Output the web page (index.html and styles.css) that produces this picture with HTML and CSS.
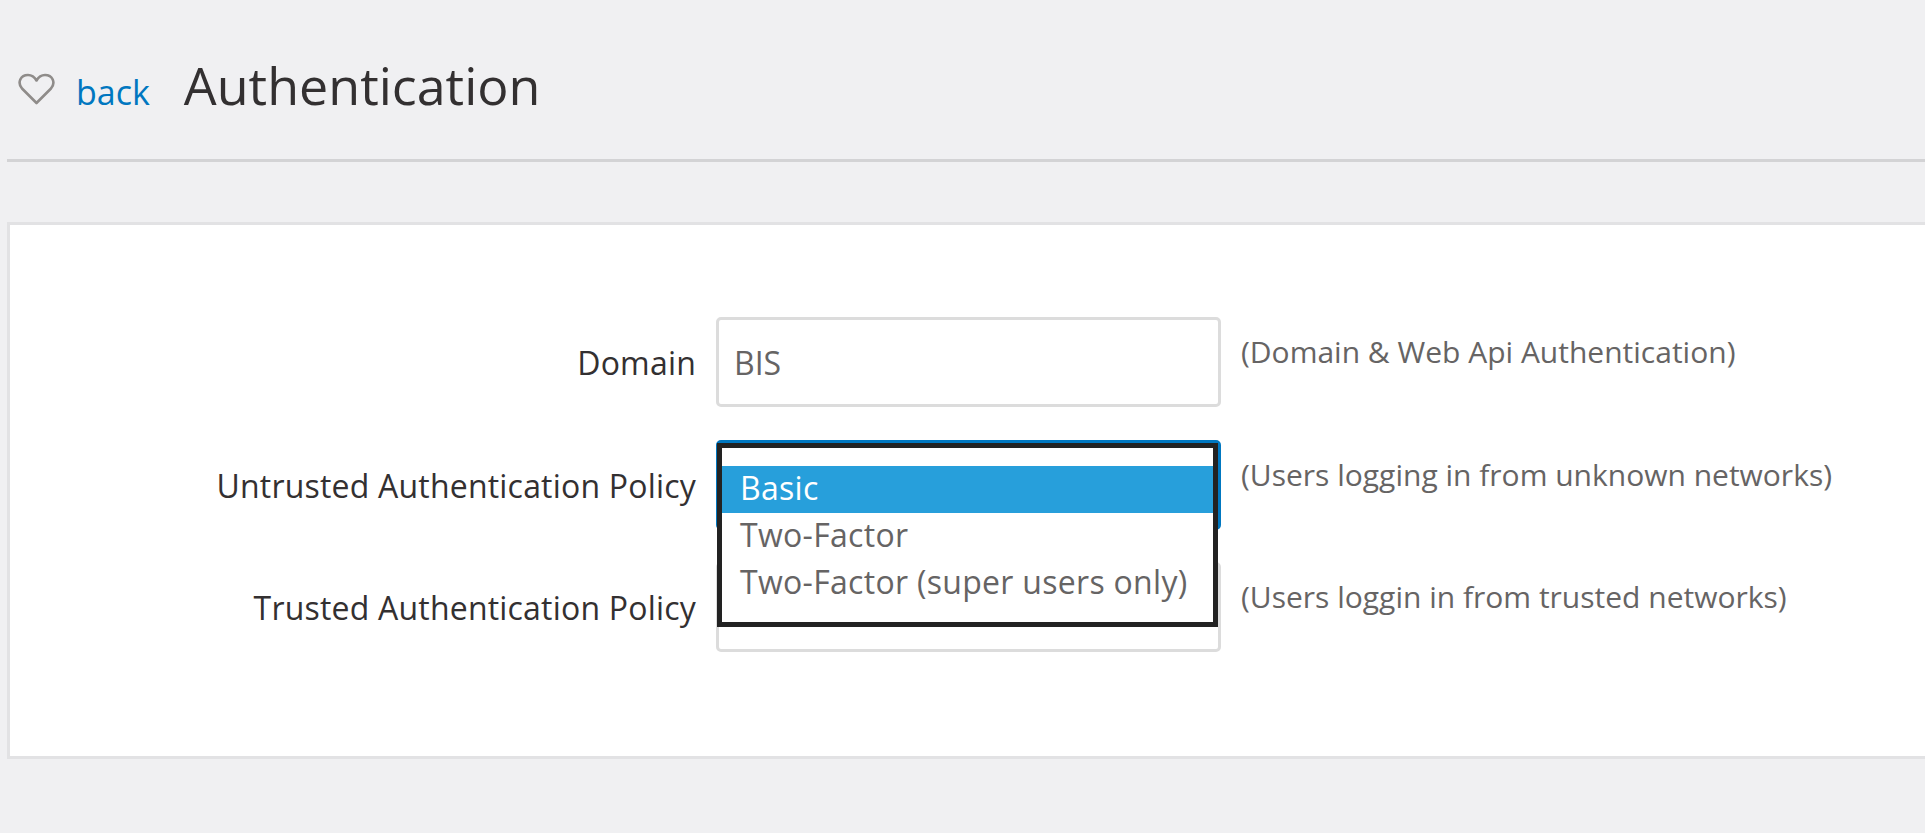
FILE: index.html
```html
<!DOCTYPE html>
<html lang="en">
<head>
  <meta charset="UTF-8">
  <title>Authentication</title>
  <link rel="stylesheet" href="styles.css">
</head>
<body>
  <header class="page-header">
    <svg class="fav" width="37" height="32" viewBox="0 0 37 32" fill="none" stroke="#8f8c8a" stroke-width="2.6" stroke-linejoin="round">
      <path d="M18.500 30 L4 15.500 C-1 9.500 2.500 2 10 2 C13.500 2 16.500 4 18.500 7.500 C20.500 4 23.500 2 27 2 C34.500 2 38 9.500 33 15.500 Z"/>
    </svg>
    <a class="back" href="#">back</a>
    <h1>Authentication</h1>
  </header>

  <section class="panel">
    <div class="row">
      <label>Domain</label>
      <div class="field">BIS</div>
      <span class="hint">(Domain &amp; Web Api Authentication)</span>
    </div>
    <div class="row">
      <label>Untrusted Authentication Policy</label>
      <div class="field field-focus">
        <ul class="dropdown">
          <li class="selected">Basic</li>
          <li>Two-Factor</li>
          <li>Two-Factor (super users only)</li>
        </ul>
      </div>
      <span class="hint">(Users logging in from unknown networks)</span>
    </div>
    <div class="row">
      <label>Trusted Authentication Policy</label>
      <div class="field"></div>
      <span class="hint">(Users loggin in from trusted networks)</span>
    </div>
  </section>
</body>
</html>
```

FILE: styles.css
```css
:root {
  --bg: #f0f0f2;
  --line: #d3d3d5;
  --border: #e2e2e4;
  --input-border: #dcdcdc;
  --text: #333031;
  --muted: #666464;
  --blue: #0077c0;
}

body {
  margin: 0;
  font-family: "Open Sans", sans-serif;
  background-color: var(--bg);
  color: var(--text);
  overflow: hidden;
  height: 833px;
}

.page-header {
  display: flex;
  align-items: baseline;
  box-sizing: border-box;
  height: 162px;
  margin-left: 7px;
  padding: 59px 0 0 11px;
  border-bottom: 3px solid var(--line);
}

.back {
  margin-left: 21px;
  color: var(--blue);
  text-decoration: none;
  font-size: 34px;
}

h1 {
  margin: 0 0 0 34px;
  font-size: 52px;
  line-height: 52px;
  font-weight: 400;
}

.panel {
  box-sizing: border-box;
  height: 537px;
  margin: 60px -20px 0 7px;
  padding-top: 92px;
  background-color: white;
  border: 3px solid var(--border);
}

.row {
  display: flex;
  align-items: flex-start;
  height: 90px;
  margin-bottom: 32.5px;
}

.row label {
  width: 686px;
  margin-right: 1px;
  text-align: right;
  font-size: 32px;
  letter-spacing: 0.2px;
  line-height: 92px;
}

.field {
  position: relative;
  box-sizing: border-box;
  width: 505px;
  height: 90px;
  margin-left: 19px;
  padding-left: 15px;
  background-color: white;
  border: 3px solid var(--input-border);
  border-radius: 5px;
  font-size: 32px;
  line-height: 86px;
  color: var(--muted);
}

.field-focus {
  border-color: var(--blue);
}

.hint {
  margin: 10px 0 0 20px;
  font-size: 30px;
  line-height: 50px;
  color: var(--muted);
}

.dropdown {
  position: absolute;
  top: 0;
  left: -2px;
  z-index: 2;
  box-sizing: border-box;
  width: 501px;
  height: 184px;
  margin: 0;
  padding: 18px 0 0;
  list-style: none;
  background-color: white;
  border: 5px solid #222;
}

.dropdown li {
  height: 47px;
  padding-left: 18px;
  font-size: 32px;
  letter-spacing: 0.3px;
  line-height: 43px;
  white-space: nowrap;
}

.dropdown .selected {
  background-color: #279fdb;
  color: white;
}
```
